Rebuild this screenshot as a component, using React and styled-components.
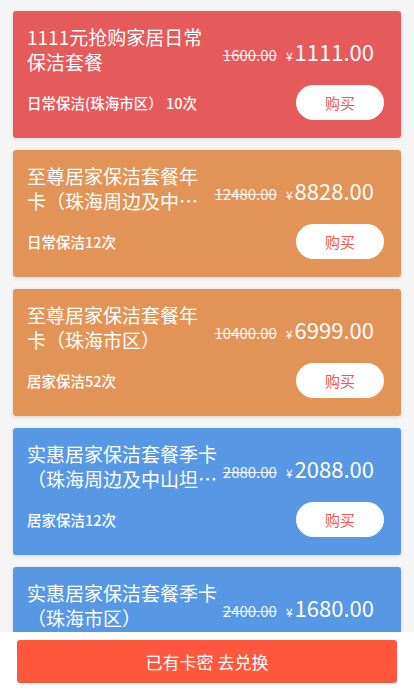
import styled, { createGlobalStyle } from "styled-components";

const GlobalStyle = createGlobalStyle`
  body {
    margin: 0;
    background: #f5f5f5;
    font-family: "Noto Sans CJK SC", "Noto Sans", sans-serif;
  }
`;

const cards = [
  { title: "1111元抢购家居日常保洁套餐", origin: "1600.00", price: "1111.00", sub: "日常保洁(珠海市区） 10次", color: "#e55a5a" },
  { title: "至尊居家保洁套餐年卡（珠海周边及中山坦洲）", origin: "12480.00", price: "8828.00", sub: "日常保洁12次", color: "#e29357" },
  { title: "至尊居家保洁套餐年卡（珠海市区）", origin: "10400.00", price: "6999.00", sub: "居家保洁52次", color: "#e29357" },
  { title: "实惠居家保洁套餐季卡（珠海周边及中山坦洲）", origin: "2880.00", price: "2088.00", sub: "居家保洁12次", color: "#5897e3" },
  { title: "实惠居家保洁套餐季卡（珠海市区）", origin: "2400.00", price: "1680.00", sub: "居家保洁4次", color: "#5897e3" },
];

const App = () => {
  return (
    <>
      <GlobalStyle />
      <List>
        {cards.map((c) => (
          <Card key={c.title} $bg={c.color}>
            <Top>
              <Title>{c.title}</Title>
              <Prices>
                <Origin>{c.origin}</Origin>
                <Price>
                  <Yen>¥</Yen>
                  {c.price}
                </Price>
              </Prices>
            </Top>
            <Bottom>
              <Sub>{c.sub}</Sub>
              <BuyButton>购买</BuyButton>
            </Bottom>
          </Card>
        ))}
      </List>
      <Footer>
        <Redeem>已有卡密 去兑换</Redeem>
      </Footer>
    </>
  );
};

const List = styled.div`
  display: flex;
  flex-direction: column;
  gap: 12px;
  padding: 11px 13px 80px;
`;

const Card = styled.div`
  background: ${(p) => p.$bg};
  border-radius: 3px;
  box-shadow: 0 1px 4px rgba(0, 0, 0, 0.12);
  padding: 13px 17px 18px 14px;
  color: #fff;
`;

const Top = styled.div`
  display: flex;
  align-items: center;
  gap: 2px;
`;

const Title = styled.div`
  flex: 1;
  min-width: 0;
  font-size: 19px;
  line-height: 25px;
  height: 50px;
  overflow: hidden;
  display: -webkit-box;
  -webkit-line-clamp: 2;
  -webkit-box-orient: vertical;
  text-overflow: ellipsis;
`;

const Prices = styled.div`
  display: flex;
  align-items: baseline;
  white-space: nowrap;
  margin-right: 10px;
  padding-top: 3px;
`;

const Origin = styled.span`
  font-size: 15px;
  text-decoration: line-through;
  opacity: 0.92;
  margin-right: 9px;
`;

const Price = styled.span`
  font-size: 22px;
`;

const Yen = styled.span`
  font-size: 12px;
  margin-right: 2px;
`;

const Bottom = styled.div`
  display: flex;
  align-items: center;
  justify-content: space-between;
  margin-top: 11px;
`;

const Sub = styled.div`
  font-size: 14.5px;
  font-weight: 500;
  white-space: pre;
`;

const BuyButton = styled.button`
  width: 88px;
  height: 35px;
  border: none;
  border-radius: 18px;
  background: #fff;
  color: #f0584a;
  font-family: inherit;
  font-size: 15px;
  padding: 0;
`;

const Footer = styled.div`
  position: fixed;
  left: 0;
  right: 0;
  bottom: 0;
  height: 60px;
  background: #fff;
  padding: 8px 17px 0;
  box-sizing: border-box;
`;

const Redeem = styled.button`
  width: 100%;
  height: 43px;
  border: none;
  border-radius: 3px;
  background: #ff573d;
  color: #fff;
  font-family: inherit;
  font-size: 17px;
`;

export default App;
